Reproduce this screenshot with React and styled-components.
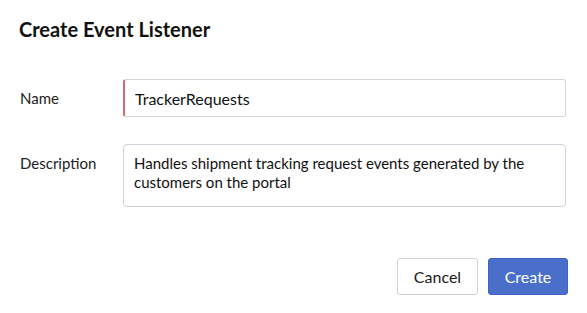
import React from "react";
import styled, { createGlobalStyle } from "styled-components";

const Global = createGlobalStyle`
	html, body {
		margin: 0;
		padding: 0;
		background: #ffffff;
	}
	body {
		font-family: Lato, "Liberation Sans", sans-serif;
		color: #1d1d1d;
	}
	* {
		box-sizing: border-box;
	}
`;

const Dialog = styled.div`
	width: 587px;
	height: 313px;
	padding: 17px 19px 0 19px;
	display: flex;
	flex-direction: column;
`;

const Title = styled.h2`
	margin: 0;
	font-size: 20px;
	font-weight: 700;
	line-height: 24px;
	color: #111;
`;

const Form = styled.div`
	margin-top: 38px;
	display: flex;
	flex-direction: column;
	gap: 27px;
	padding-right: 2px;
`;

const Row = styled.div`
	display: grid;
	grid-template-columns: 104px 1fr;
	align-items: ${(p) => (p.top ? "start" : "center")};
`;

const Label = styled.label`
	font-size: 15px;
	color: #222;
	padding-left: 1px;
	padding-top: ${(p) => (p.top ? "10px" : "0")};
`;

const Input = styled.input`
	height: 38px;
	width: 100%;
	border: 1px solid #d6d6dc;
	border-left: 2px solid ${(p) => (p.invalid ? "#d0696b" : "#d6d6dc")};
	border-radius: 3px;
	padding: 0 10px;
	font-family: Lato, "Liberation Sans", sans-serif;
	font-size: 16px;
	color: #111;
	outline: none;
`;

const TextArea = styled.textarea`
	height: 63px;
	width: 100%;
	border: 1px solid #d1d3dc;
	border-radius: 4px;
	padding: 9px 10px 7px 10px;
	font-family: Lato, "Liberation Sans", sans-serif;
	font-size: 15px;
	line-height: 19px;
	color: #111;
	resize: none;
	outline: none;
`;

const Actions = styled.div`
	margin-top: 51px;
	display: flex;
	justify-content: flex-end;
	gap: 10px;
`;

const Button = styled.button`
	height: 37px;
	width: ${(p) => p.w}px;
	border-radius: 3px;
	font-family: Lato, "Liberation Sans", sans-serif;
	font-size: 16px;
	cursor: pointer;
	border: 1px solid ${(p) => (p.primary ? "#3d62c0" : "#d4d4d4")};
	background: ${(p) => (p.primary ? "#4a6fcb" : "#ffffff")};
	color: ${(p) => (p.primary ? "#ffffff" : "#1a1a1a")};
`;

export default function App() {
	return (
		<>
			<Global />
			<Dialog>
				<Title>Create Event Listener</Title>
				<Form>
					<Row>
						<Label>Name</Label>
						<Input invalid defaultValue="TrackerRequests" />
					</Row>
					<Row top>
						<Label top>Description</Label>
						<TextArea defaultValue="Handles shipment tracking request events generated by the customers on the portal" />
					</Row>
				</Form>
				<Actions>
					<Button w={81}>Cancel</Button>
					<Button primary w={80}>Create</Button>
				</Actions>
			</Dialog>
		</>
	);
}
